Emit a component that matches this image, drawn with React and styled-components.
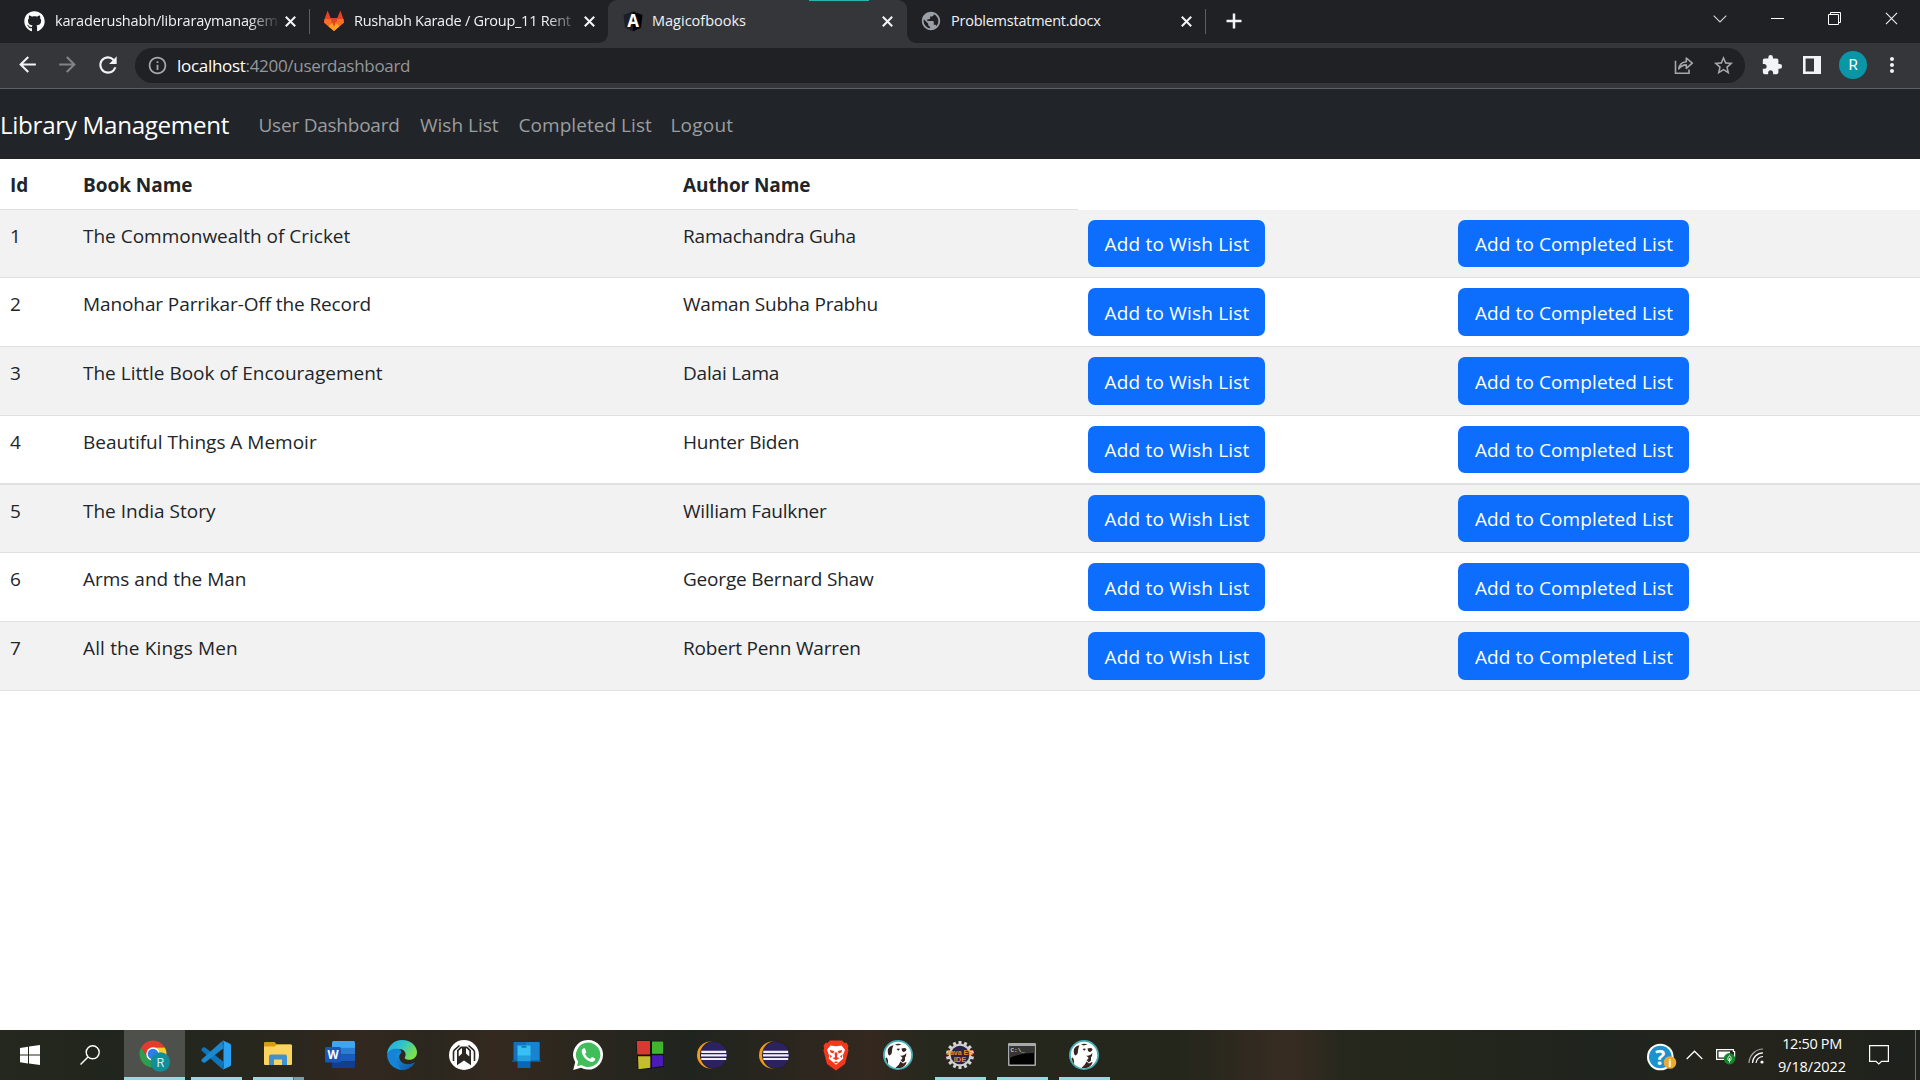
import React from "react";
import styled, { createGlobalStyle, css } from "styled-components";
import { FaGithub } from "react-icons/fa";
import {
  MdArrowBack,
  MdArrowForward,
  MdRefresh,
  MdInfoOutline,
  MdStarBorder,
  MdExtension,
  MdMoreVert,
  MdPublic,
} from "react-icons/md";

const Global = createGlobalStyle`
  * { box-sizing: border-box; }
  html, body { margin: 0; padding: 0; background: #fff; overflow: hidden; }
  body { font-family: "Open Sans", "Noto Sans", sans-serif; }
  svg { display: block; flex: none; overflow: visible; }
`;

const Screen = styled.div`
  display: flex;
  flex-direction: column;
  width: 1920px;
  height: 1080px;
  overflow: hidden;
  background: #fff;
`;

const Label = styled.span`
  white-space: nowrap;
  letter-spacing: ${(p) => p.$track || 0}px;
`;

/* ---------- browser tab strip ---------- */

const TabStrip = styled.header`
  display: flex;
  flex: none;
  height: 43px;
  background: #202124;
`;

const Tab = styled.div`
  position: relative;
  display: flex;
  align-items: center;
  width: ${(p) => p.$width}px;
  padding: 0 ${(p) => p.$end}px 1px ${(p) => p.$start}px;
  color: #f1f2f4;
  font-size: 14.5px;
  ${(p) =>
    p.$active &&
    css`
      background: #35363a;
      border-radius: 9px 9px 0 0;
      &::before,
      &::after {
        content: "";
        position: absolute;
        bottom: 0;
        width: 9px;
        height: 9px;
      }
      &::before {
        left: -9px;
        background: radial-gradient(circle at 0 0, transparent 8.5px, #35363a 9px);
      }
      &::after {
        right: -9px;
        background: radial-gradient(circle at 100% 0, transparent 8.5px, #35363a 9px);
      }
    `}
`;

const TabIcon = styled.span`
  display: flex;
  justify-content: center;
  width: 22px;
  margin-right: ${(p) => p.$gap}px;
`;

const TabTitle = styled(Label)`
  flex: 1;
  min-width: 0;
  line-height: 24px;
  ${(p) =>
    p.$fade &&
    css`
      mask-image: linear-gradient(90deg, #000 86%, transparent 101%);
    `}
`;

const LoadingMark = styled.i`
  position: absolute;
  top: 0;
  left: 201px;
  width: 60px;
  height: 1px;
  background: #2bb3b4;
`;

const TabDivider = styled.i`
  align-self: center;
  width: 1px;
  height: 25px;
  background: #5b5e62;
`;

const WindowControls = styled.div`
  display: flex;
  align-items: center;
  gap: 44px;
  margin-left: auto;
  padding: 0 22px 6px 0;
`;

const NewTab = styled.div`
  display: flex;
  align-items: center;
  padding-left: 20px;
  padding-bottom: 1px;
`;

/* ---------- browser toolbar ---------- */

const Toolbar = styled.div`
  display: flex;
  flex: none;
  align-items: center;
  height: 46px;
  padding-bottom: 1px;
  background: #35363a;
  border-bottom: 1px solid #5f6063;
`;

const NavButtons = styled.div`
  display: flex;
  gap: 15px;
  padding-left: 14.5px;
  width: 135px;
  color: #f1f3f4;
`;

const Dim = styled.span`
  color: #808387;
`;

const Omnibox = styled.div`
  display: flex;
  align-items: center;
  width: 1610px;
  height: 35px;
  padding: 0 10px 0 12px;
  border-radius: 18px;
  background: #202124;
  color: #a4a8ad;
`;

const Url = styled(Label)`
  flex: 1;
  margin-left: 9px;
  padding-top: 1px;
  color: #94989c;
  font-size: 17px;
  line-height: 26px;
`;

const Host = styled.span`
  color: #fff;
`;

const OmniActions = styled.div`
  display: flex;
  align-items: center;
  gap: 18px;
`;

const ToolActions = styled.div`
  display: flex;
  align-items: center;
  padding-left: 16px;
  color: #f1f3f4;
`;

const ToolItem = styled.span`
  display: flex;
  margin-right: ${(p) => p.$gap}px;
`;

const Avatar = styled.span`
  display: flex;
  align-items: center;
  justify-content: center;
  width: 28px;
  height: 28px;
  border-radius: 50%;
  background: #0b96a8;
  color: #fff;
  font: 400 15px Roboto, sans-serif;
`;

/* ---------- application ---------- */

const Navbar = styled.nav`
  display: flex;
  flex: none;
  align-items: center;
  height: 70px;
  background: #212529;
`;

const Brand = styled(Label)`
  width: 258.500px;
  padding-top: 2px;
  color: #fff;
  font-size: 24.200px;
  line-height: 38px;
`;

const NavLink = styled(Label)`
  width: ${(p) => p.$width}px;
  padding-top: 1px;
  color: #9b9d9f;
  font-size: 19px;
  line-height: 30px;
`;

const Table = styled.main`
  flex: 1;
  color: #212529;
  font-size: 19px;
  line-height: 30px;
`;

const Row = styled.div`
  display: grid;
  grid-template-columns: 73px 600px 405px 370px 1fr;
  height: ${(p) => p.$height}px;
  background: ${(p) => (p.$striped ? "#f2f2f2" : "#fff")};
`;

const Cell = styled.div`
  padding: 11px 10px 0;
  border-bottom: ${(p) => p.$line ?? 1}px solid #dee0e2;
`;

const HeadCell = styled(Cell)`
  font-weight: 700;
`;

const ActionCell = styled(Cell)`
  padding-top: 10px;
`;

const Button = styled.button`
  display: flex;
  align-items: center;
  justify-content: center;
  width: ${(p) => p.$width}px;
  height: ${(p) => p.$height}px;
  padding: ${(p) => (p.$height > 47 ? 2 : 0)}px 0 0 1px;
  border: 0;
  border-radius: 7px;
  background: #0d6efd;
  color: #fff;
  font: 400 19px "Open Sans", "Noto Sans", sans-serif;
`;

/* ---------- taskbar ---------- */

const Taskbar = styled.footer`
  display: flex;
  flex: none;
  height: 50px;
  background: linear-gradient(
    90deg,
    #25281d 0,
    #20251d 110px,
    #24271e 200px,
    #2a271e 290px,
    #33281f 360px,
    #2b271e 430px,
    #34291f 500px,
    #2b271e 580px,
    #20241f 690px,
    #2a261e 790px,
    #34281f 870px,
    #26281e 930px,
    #24261c 1180px,
    #382c22 1290px,
    #27281d 1340px,
    #23261b 1450px,
    #20241f 1600px,
    #25241c 1740px,
    #1e221c 1920px
  );
`;

const Slot = styled.div`
  position: relative;
  display: flex;
  align-items: center;
  justify-content: center;
  width: ${(p) => p.$width || 62}px;
  background: ${(p) => (p.$active ? "#4e514b" : "transparent")};
  ${(p) =>
    p.$running &&
    css`
      &::after {
        content: "";
        position: absolute;
        bottom: 0;
        left: ${p.$active ? 0 : 6}px;
        width: ${p.$active ? 61 : 51}px;
        height: 3px;
        background: ${p.$stacked
          ? "linear-gradient(90deg, #91dbe2 40px, #47777c 40px, #47777c 41px, #6ba5aa 41px)"
          : "#91dbe2"};
      }
    `}
`;

const Tray = styled.div`
  display: flex;
  align-items: center;
  margin-left: auto;
  height: 50px;
  color: #fff;
`;

const TrayItem = styled.span`
  display: flex;
  padding-top: ${(p) => p.$drop || 0}px;
  margin-right: ${(p) => p.$gap}px;
`;

const Clock = styled.div`
  display: flex;
  flex-direction: column;
  align-items: center;
  width: 70px;
  margin-right: 22px;
  padding-top: 1px;
  font-size: 14.5px;
  line-height: 22.4px;
`;

const ShowDesktop = styled.i`
  width: 5px;
  height: 50px;
  border-left: 1px solid #6f726d;
`;

/* ---------- drawings ---------- */

const Cross = ({ size = 11, stroke = 2 }) => (
  <svg width={size} height={size} viewBox="0 0 11 11" stroke="#f4f5f6" strokeWidth={stroke}>
    <path d="M.8.8 10.200 10.200M10.200.8.8 10.200" />
  </svg>
);

const GitlabIcon = () => (
  <svg width="20" height="22" viewBox="0 0 20 22">
    <path d="M3.600.5.6 9 0 12.500 10 21 20 12.500 19.400 9 16.400.5 13.300 8H6.700Z" fill="#e24329" />
    <path d="M.6 9H6.900L10 21 0 12.500ZM19.400 9H13.100L10 21 20 12.500Z" fill="#fc6d26" />
    <path d="M4.500 16.200 10 11.500 15.500 16.200 10 21Z" fill="#fca326" />
    <path d="M6.900 8.800H13.100L10 17Z" fill="#e24329" />
  </svg>
);

const AngularIcon = () => (
  <svg width="20" height="21" viewBox="0 0 20 21">
    <path d="M10 .5 19.500 4 18 16.400 10 20.600Z" fill="#000107" />
    <path d="M10 .5.5 4 2 16.400 10 20.600Z" fill="#1c1d27" />
    <text x="10" y="16" fill="#fff" fontFamily="Open Sans" fontSize="17" fontWeight="700" textAnchor="middle">
      A
    </text>
  </svg>
);

const ShareIcon = () => (
  <svg width="20" height="19" viewBox="0 0 20 19" fill="none" stroke="#a4a8ad" strokeWidth="1.600">
    <path d="M1.500 4.800V17.200H15V13.600" />
    <path d="M4.800 12.900C5.400 8.400 8.300 6 12.300 5.700V2L18.300 7.200 12.300 12.300V8.900C9.200 8.900 6.800 10.100 4.800 12.900Z" strokeLinejoin="round" />
  </svg>
);

const PanelIcon = () => (
  <svg width="18" height="18" viewBox="0 0 18 18">
    <path fill="#f1f3f4" fillRule="evenodd" d="M0 0H18V18H0ZM2.600 2.600V15.400H11V2.600Z" />
  </svg>
);

const ChevronIcon = () => (
  <svg width="14" height="8" viewBox="0 0 14 8" fill="none" stroke="#d4d5d6" strokeWidth="1.100">
    <path d="M.7.7 7 7 13.300.7" />
  </svg>
);

const MinimizeIcon = () => (
  <svg width="13" height="13" viewBox="0 0 13 13">
    <path d="M0 6H13V7H0Z" fill="#fff" />
  </svg>
);

const RestoreIcon = () => (
  <svg width="13" height="13" viewBox="0 0 13 13" fill="none" stroke="#fff">
    <path d="M.5 2.500H10.500V12.500H.5ZM2.500 2.500V.5H12.500V10.500H10.500" />
  </svg>
);

const PlusIcon = () => (
  <svg width="16" height="16" viewBox="0 0 16 16" stroke="#f1f3f4" strokeWidth="2.500">
    <path d="M8 .5V15.500M.5 8H15.500" />
  </svg>
);

const WindowsIcon = () => (
  <svg width="20" height="20" viewBox="0 0 20 20" fill="#fff">
    <path d="M0 2.900 8 1.700V9.500H0ZM9 1.600 20 0V9.500H9ZM0 10.500H8V18.400L0 17.200ZM9 10.500H20V20L9 18.500Z" />
  </svg>
);

const SearchIcon = () => (
  <svg width="20" height="20" viewBox="0 0 20 20" fill="none" stroke="#fff" strokeWidth="1.400">
    <circle cx="12.700" cy="7.300" r="6.500" />
    <path d="M8 12 .5 19.600" />
  </svg>
);

const ChromeIcon = () => (
  <svg width="32" height="32" viewBox="0 0 32 32">
    <path d="M2.300 8.300A13.500 13.500 0 0 0 14 28.500L20 18.500 8.200 18.300Z" fill="#2f9e4c" />
    <path d="M25.700 8.300A13.500 13.500 0 0 1 14 28.500L19.800 18.300 14 8.300Z" fill="#fccb2e" />
    <path d="M14 8.400H25.800A13.500 13.500 0 0 0 2.300 8.300L8.200 18.300Z" fill="#e33b2e" />
    <circle cx="14" cy="15" r="6.700" fill="#fff" />
    <circle cx="14" cy="15" r="5.300" fill="#2f7de9" />
    <circle cx="21.300" cy="23" r="9.800" fill="#108f98" />
    <text x="21.300" y="27.500" fill="#d5eef0" fontFamily="Roboto" fontSize="12.500" textAnchor="middle">
      R
    </text>
  </svg>
);

const VscodeIcon = () => (
  <svg width="30" height="30" viewBox="0 0 30 30">
    <path d="M3 7.200Q2 7 .5 9V10.400L21.500 29.300 22.500 21.700 4.200 7.500Q3.600 7.100 3 7.200Z" fill="#0f74ba" />
    <path d="M3 22.800Q2 23 .5 21V19.600L21.500.7 22.500 8.300 4.200 22.500Q3.600 22.900 3 22.800Z" fill="#1a87cf" />
    <path d="M21.500.3 28.700 3.500Q30 4.200 30 5.500V24.500Q30 25.800 28.700 26.500L21.500 29.800Q22.500 29 22.500 27V3Q22.500 1.200 21.500.3Z" fill="#2ba2f2" />
  </svg>
);

const ExplorerIcon = () => (
  <svg width="28" height="26" viewBox="0 0 28 26">
    <path d="M0 1Q0 0 1 0H10.500L13 2.500H27V8H0Z" fill="#d99a12" />
    <path d="M0 4.500H10.500L13 2.500H27Q28 2.500 28 3.500V22Q28 23 27 23H1Q0 23 0 22Z" fill="#fbd460" />
    <path d="M5 23V14.500Q5 12.500 7 12.500H21Q23 12.500 23 14.500V23H18V17.500H10V23Z" fill="#3f92cd" />
  </svg>
);

const WordIcon = () => (
  <svg width="30" height="28" viewBox="0 0 30 28">
    <path d="M7 1.500Q7 0 8.500 0H28.500Q30 0 30 1.500V7H7Z" fill="#41a5ee" />
    <path d="M7 6.800H30V13.500H7Z" fill="#2b7cd3" />
    <path d="M7 13.500H30V20.200H7Z" fill="#185abd" />
    <path d="M7 20.200H30V25.500Q30 27 28.500 27H8.500Q7 27 7 25.500Z" fill="#103f91" />
    <rect x="0" y="6" width="16" height="15.500" rx="1.500" fill="#1a56b4" />
    <text x="8" y="18" fill="#fff" fontFamily="Open Sans" fontSize="11.500" fontWeight="700" textAnchor="middle">
      W
    </text>
  </svg>
);

const EdgeIcon = () => (
  <svg width="30" height="30" viewBox="0 0 30 30">
    <defs>
      <linearGradient id="edgeTop" x1="0" y1="0" x2="1" y2=".5">
        <stop offset="0" stopColor="#1fa7e0" />
        <stop offset=".5" stopColor="#2fc4cf" />
        <stop offset="1" stopColor="#7be04b" />
      </linearGradient>
      <linearGradient id="edgeLow" x1="0" y1="0" x2="1" y2="1">
        <stop offset="0" stopColor="#1c93de" />
        <stop offset="1" stopColor="#0f4f9d" />
      </linearGradient>
    </defs>
    <path d="M0 14.500A15 15 0 0 1 15 0C24 0 30 6.200 30 12.200 30 17 26.400 19.800 22.500 19.800 18.500 19.800 17.200 18.300 18 17 19.800 14.200 18 9 12 9 6 9 1.500 11 0 14.500Z" fill="url(#edgeTop)" />
    <path d="M0 14.500C1.500 10 6.500 8 10.500 8.800 14.500 9.600 15 12 13.500 13.500 11 16 11.800 20.500 15.500 23 19.500 25.500 25 24.500 28 22.300A15 15 0 0 1 0 14.500Z" fill="#1583d6" />
    <path d="M9 17C9 13.500 11 11 13.800 12.800 11 16 11.800 20.500 15.500 23 19.500 25.500 25 24.500 28 22.300 25 27.500 20 30 15.500 30 11 28 9 22 9 17Z" fill="url(#edgeLow)" />
  </svg>
);

const GatewayIcon = () => (
  <svg width="30" height="30" viewBox="0 0 30 30">
    <circle cx="15" cy="15" r="15" fill="#fff" />
    <g fill="none" stroke="#2b2823" strokeWidth="1.600">
      <path d="M4.500 21V12Q4.500 11 5.300 10.200L10.500 5.500" />
      <path d="M25.500 21V12Q25.500 11 24.700 10.200L19.500 5.500" />
    </g>
    <path d="M11.800 6.500H18.200L22 10.300V25.300L15 20.500 8 25.300V10.300ZM10.200 11.200" fill="#2b2823" />
    <path d="M9.700 11 12.500 8.300H13V13.500L9.700 16.500ZM20.300 11 17.500 8.300H17V13.500L20.300 16.500Z" fill="#fff" />
  </svg>
);

const PhoneLinkIcon = () => (
  <svg width="29" height="29" viewBox="0 0 29 29">
    <path d="M2.500 1H26.500Q27.500 1 27.500 2V20H1.500V2Q1.500 1 2.500 1Z" fill="#1672b8" />
    <path d="M14 1H26.500Q27.500 1 27.500 2V20H14Z" fill="#1a83cd" />
    <path d="M0 19.500H29V21H0Z" fill="#0c5594" />
    <path d="M5.500 4.500H18.500V15H5.500Z" fill="#36c0f3" />
    <path d="M5.500 14.500H18.500V20.500H5.500Z" fill="#209fe1" />
    <path d="M5.500 20.500H18.500V26Q18.500 27 17.500 27H6.500Q5.500 27 5.500 26Z" fill="#0d66b5" />
    <path d="M9.500 5.300H14.500V6.500H9.500Z" fill="#0b5a96" />
  </svg>
);

const WhatsappIcon = () => (
  <svg width="30" height="30" viewBox="0 0 30 30">
    <path d="M15.200 0A14.800 14.800 0 1 1 8 27.700L.2 30 2.200 22.300A14.800 14.800 0 0 1 15.200 0Z" fill="#fff" />
    <path d="M15.200 2.600A12.200 12.200 0 1 1 8.500 25L4 26.300 5.200 21.800A12.200 12.200 0 0 1 15.200 2.600Z" fill="#41bd5c" />
    <path d="M10.800 8.200Q8.200 9.400 8.800 12.300C9.800 17 14 21.200 18.600 21.900 20.800 22.200 22.500 20.500 22.200 18.600L18.900 17 17.200 18.900Q13.600 17.500 12 13.900L13.400 12.200 12 8.600Q11.500 8 10.800 8.200Z" fill="#fff" />
  </svg>
);

const QuadIcon = () => (
  <svg width="28" height="30" viewBox="0 0 28 30">
    <path d="M0 .5 28 1V27L2 30Z" fill="#101010" />
    <path d="M.8 1 14 1V14.500H1.300Z" fill="#d63a31" />
    <path d="M16 1.500H27.300V13.800H16Z" fill="#3fb42c" />
    <path d="M2 16.200H14.300V27.800L2.500 29.300Z" fill="#c6bd2e" />
    <path d="M16 15.200H27.300V26L16 27.500Z" fill="#4a1bb8" />
  </svg>
);

const EclipseIcon = () => (
  <svg width="30" height="28" viewBox="0 0 30 28">
    <circle cx="13.500" cy="14" r="13.500" fill="#f39a1f" />
    <circle cx="17" cy="14" r="14" fill="#242320" />
    <circle cx="16.800" cy="14" r="13" fill="#2d2260" />
    <path d="M4.300 9.800H29.200V11.900H4.300ZM4 13.300H29.600V15.600H4ZM4.300 17H29.200V19.100H4.300Z" fill="#f0effa" />
  </svg>
);

const BraveIcon = () => (
  <svg width="26" height="31" viewBox="0 0 26 31">
    <path d="M7 .5H19L21.500 3 23.500 2.800 25.500 6 24.800 8 25.500 10.500 22 24 13 30.500 4 24 .5 10.500 1.200 8 .5 6 2.500 2.800 4.500 3Z" fill="#f4381b" />
    <path d="M7.500 5.500 13 6.300 18.500 5.500 22 9.800 19.800 15.500 20.300 18.500 13 24.800 5.700 18.500 6.200 15.500 4 9.800Z" fill="#fff" />
    <path d="M6.800 10 11.300 11 10.300 13.600 7.500 12.500ZM19.200 10 14.700 11 15.700 13.600 18.500 12.500ZM9.500 18 12 17.200 11.500 12.500H14.500L14 17.200 16.500 18 13 20.300ZM6.500 14.500 9 16.200 7.500 18ZM19.500 14.500 17 16.200 18.500 18ZM10.500 22.200 13 21.300 15.500 22.200 13 23.200Z" fill="#f4381b" />
  </svg>
);

const BeaverIcon = () => (
  <svg width="30" height="30" viewBox="0 0 30 30">
    <circle cx="15" cy="15" r="15" fill="#48aeb5" />
    <circle cx="15" cy="15" r="13.200" fill="#fff" />
    <path d="M4.800 9.500Q6.500 5.500 10.500 5.200 9 8 9 11 9 14.500 6.500 15.500 4.500 15 4.800 9.500Z" fill="#362520" />
    <path d="M12 4.500Q15.500 3 18.500 4.500L14.500 5.500Z" fill="#362520" />
    <path d="M3.500 17.500Q5.500 19 5 24 3 21.500 2.500 18Z" fill="#362520" />
    <path d="M13.500 9Q15.500 7.800 17 9L15.300 10.800ZM18.500 8.500Q22.500 7 23.500 9.300 23 12.300 20.500 12 18.500 11 18.500 8.500ZM17 15.500Q21 16.500 23.300 13 23.500 16 22 17.200L22 20.500 19.800 22.500 17.500 20 19.300 19 19.300 17.500Z" fill="#362520" />
    <path d="M12.500 27.800Q16 25.500 17.500 21.500L20 23.500 23.500 21.800Q23.500 25 19.500 27.200 16 28.600 12.500 27.800Z" fill="#362520" />
  </svg>
);

const TEETH = Array.from({ length: 14 }, (_, i) => (i * 360) / 14);

const JavaIcon = () => (
  <svg width="30" height="30" viewBox="0 0 30 30">
    {TEETH.map((a) => (
      <rect key={a} x="13.500" y="1" width="3" height="5" fill="#d5d5d5" transform={`rotate(${a} 15 15)`} />
    ))}
    <circle cx="15" cy="15" r="11.300" fill="#cfcfd0" />
    <circle cx="15" cy="15" r="9.300" fill="#2a2344" />
    <g fontFamily="Liberation Sans" fontWeight="700" fill="#f08a2c" textAnchor="middle">
      <text x="14.500" y="14.500" fontSize="7">Java EE</text>
      <text x="15" y="21.500" fontSize="7.500">IDE</text>
    </g>
  </svg>
);

const TerminalIcon = () => (
  <svg width="28" height="25" viewBox="0 0 28 25">
    <rect width="28" height="23" rx="1" fill="#a9a9a9" />
    <rect x="1.500" y="3" width="25" height="18.500" fill="#020202" />
    <path d="M1.500 3H26.500V10Q12 10 1.500 15Z" fill="#353535" />
    <text x="2.500" y="8.800" fill="#eee" fontFamily="Liberation Mono" fontSize="6">
      C:\_
    </text>
  </svg>
);

const HelpIcon = () => (
  <svg width="30" height="28" viewBox="0 0 30 28">
    <circle cx="13.300" cy="14" r="13.300" fill="#fff" />
    <circle cx="13.300" cy="14" r="11.300" fill="#1b93cf" />
    <text x="13.300" y="21.800" fill="#fff" fontFamily="Open Sans" fontSize="21" fontWeight="700" textAnchor="middle">
      ?
    </text>
    <circle cx="23" cy="19.500" r="6.300" fill="#eaa92f" />
    <text x="23" y="23.700" fill="#fff" fontFamily="Open Sans" fontSize="11" fontWeight="700" textAnchor="middle">
      i
    </text>
  </svg>
);

const TrayChevron = () => (
  <svg width="17" height="10" viewBox="0 0 17 10" fill="none" stroke="#fff" strokeWidth="1.300">
    <path d="M.7 9 8.500 1.200 16.300 9" />
  </svg>
);

const BatteryIcon = () => (
  <svg width="20" height="16" viewBox="0 0 20 16">
    <path d="M.6.6H17.400V2.500H18.600V8H17.400V10.400H.6Z" fill="none" stroke="#fff" strokeWidth="1.200" />
    <path d="M2.500 2.500H14V8.500H2.500Z" fill="#fff" />
    <circle cx="13.500" cy="9.800" r="5.700" fill="#16862c" />
    <path d="M13.500 6.500Q16 9 15 11L13.500 12 12 11Q11 9 13.500 6.500ZM13.500 9V13.500" fill="none" stroke="#d7f0da" />
  </svg>
);

const WifiIcon = () => (
  <svg width="16" height="16" viewBox="0 0 16 16" fill="none" strokeWidth="1.200">
    <path d="M1 15A14.500 14.500 0 0 1 15 1" stroke="#a5a8a3" />
    <path d="M4.500 15A10.500 10.500 0 0 1 15 4.800M8 15A7 7 0 0 1 15 8.500" stroke="#fff" />
    <circle cx="14" cy="14" r="1.600" fill="#fff" />
  </svg>
);

const NotificationIcon = () => (
  <svg width="20" height="20" viewBox="0 0 20 20" fill="none" stroke="#fff" strokeWidth="1.200">
    <path d="M.6.6H19.400V16.400H12.600L9.800 19 7 16.400H.6Z" />
  </svg>
);

/* ---------- content ---------- */

const BOOKS = [
  { id: 1, title: "The Commonwealth of Cricket", author: "Ramachandra Guha", row: 68, button: 47 },
  { id: 2, title: "Manohar Parrikar-Off the Record", author: "Waman Subha Prabhu", row: 69, button: 48, track: -0.1 },
  { id: 3, title: "The Little Book of Encouragement", author: "Dalai Lama", row: 69, button: 48 },
  { id: 4, title: "Beautiful Things A Memoir", author: "Hunter Biden", row: 69, button: 47, line: 2 },
  { id: 5, title: "The India Story", author: "William Faulkner", row: 68, button: 47 },
  { id: 6, title: "Arms and the Man", author: "George Bernard Shaw", row: 69, button: 48 },
  { id: 7, title: "All the Kings Men", author: "Robert Penn Warren", row: 69, button: 48, track: 0.15 },
];

const APPS = [
  { key: "vscode", Icon: VscodeIcon, running: true },
  { key: "explorer", Icon: ExplorerIcon, running: true, stacked: true },
  { key: "word", Icon: WordIcon },
  { key: "edge", Icon: EdgeIcon },
  { key: "gateway", Icon: GatewayIcon },
  { key: "phone", Icon: PhoneLinkIcon },
  { key: "whatsapp", Icon: WhatsappIcon },
  { key: "quad", Icon: QuadIcon },
  { key: "eclipse-a", Icon: EclipseIcon },
  { key: "eclipse-b", Icon: EclipseIcon },
  { key: "brave", Icon: BraveIcon },
  { key: "beaver-a", Icon: BeaverIcon },
  { key: "java", Icon: JavaIcon, running: true },
  { key: "terminal", Icon: TerminalIcon, running: true },
  { key: "beaver-b", Icon: BeaverIcon, running: true },
];

export default function App() {
  return (
    <>
      <Global />
      <Screen>
        <TabStrip>
          <Tab $width={309} $start={23.5} $end={11}>
            <TabIcon $gap={9.5}><FaGithub size={21} color="#fff" /></TabIcon>
            <TabTitle $fade $track={-0.17}>karaderushabh/libraraymanagem</TabTitle>
            <TabIcon $gap={-3}><Cross /></TabIcon>
          </Tab>
          <TabDivider />
          <Tab $width={298} $start={13} $end={9}>
            <TabIcon $gap={9}><GitlabIcon /></TabIcon>
            <TabTitle $fade $track={-0.27}>Rushabh Karade / Group_11 Rent</TabTitle>
            <TabIcon $gap={-1}><Cross /></TabIcon>
          </Tab>
          <Tab $active $width={299} $start={14} $end={9}>
            <LoadingMark />
            <TabIcon $gap={8}><AngularIcon /></TabIcon>
            <TabTitle>Magicofbooks</TabTitle>
            <TabIcon $gap={0}><Cross /></TabIcon>
          </Tab>
          <Tab $width={298} $start={13} $end={8}>
            <TabIcon $gap={9}><MdPublic size={22} color="#9aa0a6" /></TabIcon>
            <TabTitle $track={-0.24}>Problemstatment.docx</TabTitle>
            <TabIcon $gap={0}><Cross /></TabIcon>
          </Tab>
          <TabDivider />
          <NewTab><PlusIcon /></NewTab>
          <WindowControls>
            <ChevronIcon />
            <MinimizeIcon />
            <RestoreIcon />
            <Cross size={13} stroke={0.9} />
          </WindowControls>
        </TabStrip>

        <Toolbar>
          <NavButtons>
            <MdArrowBack size={25} />
            <Dim><MdArrowForward size={25} /></Dim>
            <MdRefresh size={26} />
          </NavButtons>
          <Omnibox>
            <MdInfoOutline size={21} />
            <Url $track={-0.3}><Host>localhost</Host>:4200/userdashboard</Url>
            <OmniActions>
              <ShareIcon />
              <MdStarBorder size={23} />
            </OmniActions>
          </Omnibox>
          <ToolActions>
            <ToolItem $gap={20}><MdExtension size={22} /></ToolItem>
            <ToolItem $gap={18}><PanelIcon /></ToolItem>
            <ToolItem $gap={13}><Avatar>R</Avatar></ToolItem>
            <MdMoreVert size={24} />
          </ToolActions>
        </Toolbar>

        <Navbar>
          <Brand $track={-0.32}>Library Management</Brand>
          <NavLink $width={161.5} $track={-0.23}>User Dashboard</NavLink>
          <NavLink $width={98.5}>Wish List</NavLink>
          <NavLink $width={152} $track={0.05}>Completed List</NavLink>
          <NavLink $width={80} $track={0.2}>Logout</NavLink>
        </Navbar>

        <Table>
          <Row $height={51}>
            <HeadCell>Id</HeadCell>
            <HeadCell><Label $track={-0.03}>Book Name</Label></HeadCell>
            <HeadCell><Label $track={-0.1}>Author Name</Label></HeadCell>
          </Row>
          {BOOKS.map((b) => (
            <Row key={b.id} $height={b.row} $striped={b.id % 2 === 1}>
              <Cell $line={b.line}>{b.id}</Cell>
              <Cell $line={b.line}><Label $track={b.track}>{b.title}</Label></Cell>
              <Cell $line={b.line}><Label $track={-0.19}>{b.author}</Label></Cell>
              <ActionCell $line={b.line}>
                <Button $width={177} $height={b.button}><Label $track={0.2}>Add to Wish List</Label></Button>
              </ActionCell>
              <ActionCell $line={b.line}>
                <Button $width={231} $height={b.button}><Label $track={0.1}>Add to Completed List</Label></Button>
              </ActionCell>
            </Row>
          ))}
        </Table>

        <Taskbar>
          <Slot $width={60}><WindowsIcon /></Slot>
          <Slot $width={60}><SearchIcon /></Slot>
          <Slot $width={4} />
          <Slot $width={61} $active $running><ChromeIcon /></Slot>
          {APPS.map(({ key, Icon, running, stacked }) => (
            <Slot key={key} $running={running} $stacked={stacked}><Icon /></Slot>
          ))}
          <Tray>
            <TrayItem $gap={9.5} $drop={3}><HelpIcon /></TrayItem>
            <TrayItem $gap={12.5}><TrayChevron /></TrayItem>
            <TrayItem $gap={12} $drop={4}><BatteryIcon /></TrayItem>
            <TrayItem $gap={13.5} $drop={2}><WifiIcon /></TrayItem>
            <Clock>
              <Label $track={-0.35}>12:50 PM</Label>
              <Label $track={-0.05}>9/18/2022</Label>
            </Clock>
            <TrayItem $gap={26}><NotificationIcon /></TrayItem>
            <ShowDesktop />
          </Tray>
        </Taskbar>
      </Screen>
    </>
  );
}
